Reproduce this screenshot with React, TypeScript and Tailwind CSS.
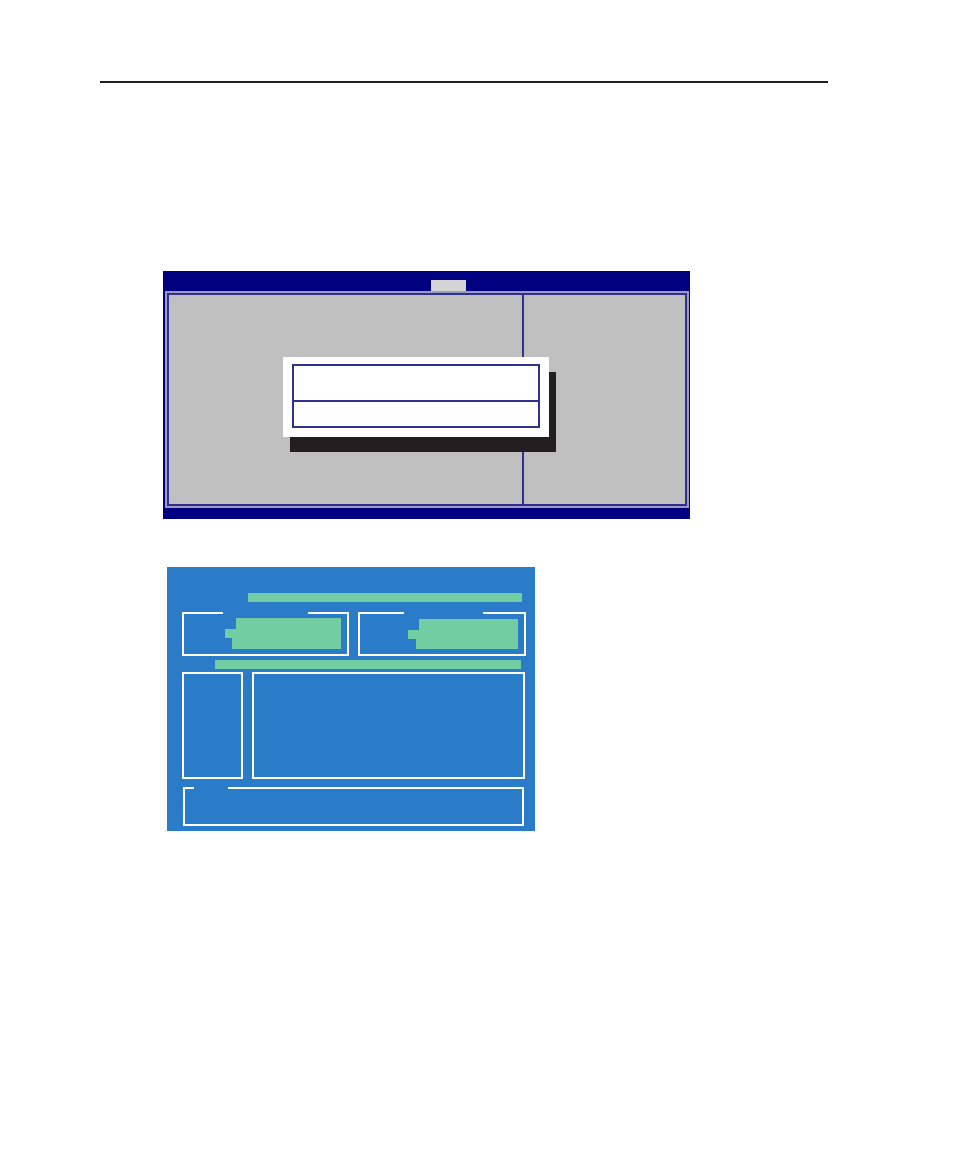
export default function App() {
  return (
    <div className="w-[953px] h-[1154px] bg-white overflow-hidden">
      {/* page rule */}
      <div className="ml-[100px] mt-[81px] w-[728px] h-[2px] bg-[#231f20]" />

      {/* setup utility screen */}
      <div className="relative ml-[163px] mt-[188px] w-[527px] h-[248px] bg-[#000080] flex flex-col">
        <div className="h-[20px] flex">
          <div className="ml-[268px] mt-[9px] w-[35px] h-[11px] bg-[#d4d4d4]" />
        </div>
        <div className="ml-[2px] w-[524px] h-[217px] border-2 border-[#9b9bbf] bg-[#c0c0c0]">
          <div className="h-full border-2 border-[#2e3192] flex">
            <div className="w-[355px] h-full border-r-2 border-[#2e3192]" />
            <div className="flex-1" />
          </div>
        </div>

        {/* dialog */}
        <div className="absolute left-[120px] top-[86px] w-[266px] h-[80px] bg-white pt-[7px] px-[9px] shadow-[7px_15px_0_0_#231f20]">
          <div className="h-[64px] border-2 border-[#2e3192] flex flex-col">
            <div className="h-[36px] border-b-2 border-[#2e3192]" />
            <div className="flex-1" />
          </div>
        </div>
      </div>

      {/* flash utility screen */}
      <div className="ml-[167px] mt-[48px] w-[368px] h-[264px] bg-[#2b7cc8] pl-[15px] pt-[26px] flex flex-col">
        <div className="ml-[66px] w-[274px] h-[9px] bg-[#73cda2]" />

        <div className="mt-[10px] flex gap-[9px]">
          <div className="relative w-[167px] h-[44px] border-2 border-white flex flex-col items-end pt-[4px] pr-[6px]">
            <span className="absolute -top-[2px] left-[39px] w-[85px] h-[2px] bg-[#2b7cc8]" />
            <div className="w-[105px] h-[11px] bg-[#73cda2]" />
            <div className="w-[116px] h-[9px] bg-[#73cda2]" />
            <div className="w-[109px] h-[11px] bg-[#73cda2]" />
          </div>
          <div className="relative w-[168px] h-[44px] border-2 border-white flex flex-col items-end pt-[5px] pr-[6px]">
            <span className="absolute -top-[2px] left-[44px] w-[79px] h-[2px] bg-[#2b7cc8]" />
            <div className="w-[99px] h-[11px] bg-[#73cda2]" />
            <div className="w-[110px] h-[9px] bg-[#73cda2]" />
            <div className="w-[102px] h-[10px] bg-[#73cda2]" />
          </div>
        </div>

        <div className="mt-[4px] ml-[33px] w-[306px] h-[9px] bg-[#73cda2]" />

        <div className="mt-[3px] flex gap-[9px]">
          <div className="w-[61px] h-[107px] border-2 border-white" />
          <div className="w-[273px] h-[107px] border-2 border-white" />
        </div>

        <div className="relative mt-[8px] ml-[1px] w-[341px] h-[39px] border-2 border-white">
          <span className="absolute -top-[2px] left-[9px] w-[34px] h-[2px] bg-[#2b7cc8]" />
        </div>
      </div>
    </div>
  );
}
